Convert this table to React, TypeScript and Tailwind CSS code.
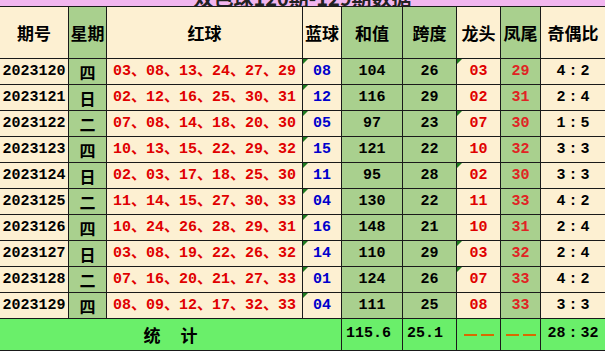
const W = ["w-[69px]", "w-[38px]", "w-[196px]", "w-[39px]", "w-[61px]", "w-[54px]", "w-[44px]", "w-[40px]", "w-[64px]"];
const GREEN = [false, true, false, false, true, true, false, true, false];

const headers = ["期号", "星期", "红球", "蓝球", "和值", "跨度", "龙头", "凤尾", "奇偶比"];

const rows = [
  ["2023120", "四", "03、08、13、24、27、29", "08", "104", "26", "03", "29", "4：2"],
  ["2023121", "日", "02、12、16、25、30、31", "12", "116", "29", "02", "31", "2：4"],
  ["2023122", "二", "07、08、14、18、20、30", "05", "97", "23", "07", "30", "1：5"],
  ["2023123", "四", "10、13、15、22、29、32", "15", "121", "22", "10", "32", "3：3"],
  ["2023124", "日", "02、03、17、18、25、30", "11", "95", "28", "02", "30", "3：3"],
  ["2023125", "二", "11、14、15、27、30、33", "04", "130", "22", "11", "33", "4：2"],
  ["2023126", "四", "10、24、26、28、29、31", "16", "148", "21", "10", "31", "2：4"],
  ["2023127", "日", "03、08、19、22、26、32", "14", "110", "29", "03", "32", "2：4"],
  ["2023128", "二", "07、16、20、21、27、33", "01", "124", "26", "07", "33", "4：2"],
  ["2023129", "四", "08、09、12、17、32、33", "04", "111", "25", "08", "33", "3：3"],
];

// rows where the 龙头 cell shows the little green "number as text" flag
const headFlag = [0, 2, 4, 7, 8];

const cjk = "font-['Noto_Sans_CJK_SC',sans-serif]";
const mono = "font-['Liberation_Mono','Noto_Sans_CJK_SC',monospace]";

const textColor = [
  "text-black",
  "text-black",
  "text-[#e00000]",
  "text-[#0000cc]",
  "text-black",
  "text-black",
  "text-[#e00000]",
  "text-[#e02424]",
  "text-black",
];

function Flag() {
  return (
    <svg className="absolute left-0 top-0" width="5" height="5" viewBox="0 0 5 5">
      <polygon points="0,0 5,0 0,5" fill="#1f7a1f" />
    </svg>
  );
}

function Ratio({ v }: { v: string }) {
  const [a, b] = v.split("：");
  return (
    <span className="flex items-center">
      <span>{a}</span>
      <span className="w-[15px] text-center">:</span>
      <span>{b}</span>
    </span>
  );
}

function Cell({ i, children, flag }: { i: number; children: React.ReactNode; flag?: boolean }) {
  return (
    <div
      className={`relative flex items-center justify-center border-r border-[#1a1a1a] last:border-r-0 ${W[i]} ${
        GREEN[i] ? "bg-[#a9d08e]" : "bg-[#fdf0d2]"
      }`}
    >
      {flag && <Flag />}
      {children}
    </div>
  );
}

export default function App() {
  return (
    <div className="w-[605px] h-[352px] bg-white overflow-hidden">
      <div className="h-[6px] bg-[#f2b6ef] overflow-hidden flex flex-col justify-end items-center">
        <div className={`${cjk} font-bold text-[20px] leading-[20px] -mb-[2px] text-[#222] whitespace-nowrap`}>
          双色球120期-129期数据
        </div>
      </div>
      <div className="border-t border-b border-[#1a1a1a]">
        <div className="flex h-[52px] border-b border-[#1a1a1a]">
          {headers.map((h, i) => (
            <Cell key={h} i={i}>
              <span className={`${cjk} font-bold text-[17px] text-black`}>{h}</span>
            </Cell>
          ))}
        </div>
        {rows.map((r, ri) => (
          <div key={r[0]} className="flex h-[26px] border-b border-[#1a1a1a]">
            {r.map((v, i) => (
              <Cell key={i} i={i} flag={i === 3 || (i === 6 && headFlag.includes(ri))}>
                <span
                  className={`${i === 1 ? cjk + " text-[16px]" : mono + " text-[15px]"} font-bold leading-none ${textColor[i]}`}
                >
                  {i === 8 ? <Ratio v={v} /> : v}
                </span>
              </Cell>
            ))}
          </div>
        ))}
        <div className={`flex h-[31px] bg-[#6aef6a] font-bold text-black`}>
          <div className={`w-[342px] border-r border-[#1a1a1a] flex items-center justify-center gap-5 ${cjk} text-[17px]`}>
            <span>统</span>
            <span>计</span>
          </div>
          <div className={`w-[61px] border-r border-[#1a1a1a] flex items-center pl-1 ${mono} text-[15px]`}>115.6</div>
          <div className={`w-[54px] border-r border-[#1a1a1a] flex items-center pl-1 ${mono} text-[15px]`}>25.1</div>
          <div className="w-[44px] border-r border-[#1a1a1a] flex items-center justify-center gap-1">
            <span className="w-[13px] h-[2px] bg-[#d66a00]" />
            <span className="w-[13px] h-[2px] bg-[#d66a00]" />
          </div>
          <div className="w-[40px] border-r border-[#1a1a1a] flex items-center justify-center gap-1">
            <span className="w-[13px] h-[2px] bg-[#d66a00]" />
            <span className="w-[13px] h-[2px] bg-[#d66a00]" />
          </div>
          <div className={`w-[64px] flex items-center justify-center ${mono} text-[15px]`}>
            <Ratio v="28：32" />
          </div>
        </div>
      </div>
    </div>
  );
}
